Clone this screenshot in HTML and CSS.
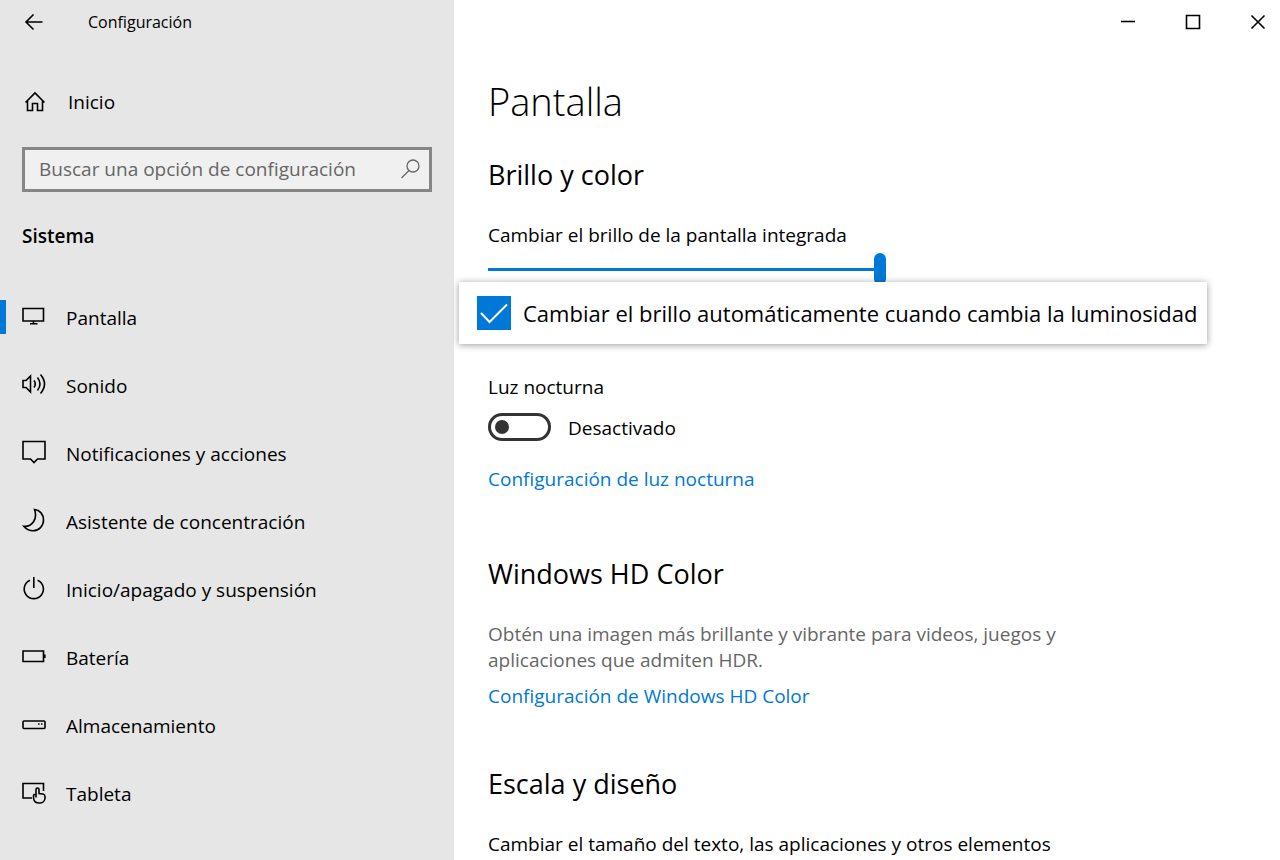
FILE: index.html
```html
<!DOCTYPE html>
<html lang="es">
<head>
<meta charset="utf-8">
<meta name="viewport" content="width=device-width, initial-scale=1">
<title>Configuración</title>
<link rel="stylesheet" href="styles.css">
</head>
<body>
<div class="window">
  <aside class="sidebar">
    <header class="titlebar">
      <button class="back" type="button" aria-label="Atrás">
        <svg class="icon" viewBox="0 0 24 24"><path d="M20.500 12H4M11.500 4.500 4 12l7.500 7.500"/></svg>
      </button>
      <span class="app-name">Configuración</span>
    </header>
    <a class="home" href="#">
      <svg class="icon" viewBox="0 0 24 24"><path d="M2.500 12.500 12 3l9.500 9.500M4.500 11v9.500h5V13.500h5v7h5V11"/></svg>
      <span>Inicio</span>
    </a>
    <form class="search">
      <input class="search-input" type="search" placeholder="Buscar una opción de configuración" aria-label="Buscar una opción de configuración">
      <button class="search-button" type="button" aria-label="Buscar">
        <svg class="icon icon-thin" viewBox="0 0 24 24"><circle cx="14" cy="9" r="6"/><path d="M10 13.500 2.500 21"/></svg>
      </button>
    </form>
    <h2 class="section-name">Sistema</h2>
    <nav class="nav">
      <a class="nav-item nav-item-current" href="#" aria-current="page">
        <svg class="icon" viewBox="0 0 24 24"><path d="M1 4.500h20.500v12.500H1zM11.500 17v3M8 19.800h7.500"/></svg>
        <span>Pantalla</span>
      </a>
      <a class="nav-item" href="#">
        <svg class="icon" viewBox="0 0 24 24"><path d="M1 8.500h3L8.500 4v16L4 15.500H1zM12 8.500q2.500 3.500 0 7M15.500 5.500q5 6.500 0 13M18.500 2.500q8 9.500 0 19"/></svg>
        <span>Sonido</span>
      </a>
      <a class="nav-item" href="#">
        <svg class="icon" viewBox="0 0 24 24"><path d="M1 1.500h22v17.500h-7.500L12 22.500 8.500 19H1z"/></svg>
        <span>Notificaciones y acciones</span>
      </a>
      <a class="nav-item" href="#">
        <svg class="icon" viewBox="0 0 24 24"><path d="M12.500 1.500C18 2 21.500 6.500 21.500 12A10.500 10.500 0 0 1 11 22.800C7.200 22.800 4 21 1.800 18.300 10 19 16 11 12.500 1.500z"/></svg>
        <span>Asistente de concentración</span>
      </a>
      <a class="nav-item" href="#">
        <svg class="icon" viewBox="0 0 24 24"><path d="M11.800 1v11M8 4.200a9.600 9.600 0 1 0 7.600 0"/></svg>
        <span>Inicio/apagado y suspensión</span>
      </a>
      <a class="nav-item" href="#">
        <svg class="icon" viewBox="0 0 24 24"><path d="M1 7h20.500v10.500H1zM22.800 10.500v3.500"/></svg>
        <span>Batería</span>
      </a>
      <a class="nav-item" href="#">
        <svg class="icon" viewBox="0 0 24 24"><rect x="1" y="9" width="22" height="7.500" rx="1"/><path d="M16 12h1.500M19 12h1.500"/></svg>
        <span>Almacenamiento</span>
      </a>
      <a class="nav-item" href="#">
        <svg class="icon" viewBox="0 0 24 24"><path d="M10 18H1V3.500h20.500V11M11.500 16c0-1.500 1-2 2.500-1V9.500c0-2 3-2 3 0v4l4 .500q2 .500 2 2.500V18c0 3-2.500 5-5.500 5-4 0-6-2.500-6-5.500zM14 15v2.500"/></svg>
        <span>Tableta</span>
      </a>
    </nav>
  </aside>
  <main class="main">
    <div class="window-controls">
      <button class="window-button" type="button" aria-label="Minimizar"><svg class="icon" viewBox="0 0 24 24"><path d="M5 11.500h14"/></svg></button>
      <button class="window-button window-button-wide" type="button" aria-label="Maximizar"><svg class="icon" viewBox="0 0 24 24"><path d="M5.500 5.500h13v13h-13z"/></svg></button>
      <button class="window-button" type="button" aria-label="Cerrar"><svg class="icon" viewBox="0 0 24 24"><path d="m5.500 5.500 13 13m0-13-13 13"/></svg></button>
    </div>
    <div class="content">
      <h1 class="page-title">Pantalla</h1>
      <section class="group group-main">
        <h2 class="group-title">Brillo y color</h2>
        <label class="label" for="brightness">Cambiar el brillo de la pantalla integrada</label>
        <input class="slider" id="brightness" type="range" min="0" max="100" value="100">
        <label class="callout">
          <input class="checkbox" type="checkbox" checked>
          <svg class="check-mark" viewBox="0 0 34 34"><path d="m4 17 8.500 9L30 8.500"/></svg>
          <span>Cambiar el brillo automáticamente cuando cambia la luminosidad</span>
        </label>
        <span class="label" id="night-label">Luz nocturna</span>
        <div class="toggle-row">
          <input class="toggle" id="night" type="checkbox" role="switch" aria-labelledby="night-label">
          <label for="night">Desactivado</label>
        </div>
        <a class="link" href="#">Configuración de luz nocturna</a>
      </section>
      <section class="group">
        <h2 class="group-title">Windows HD Color</h2>
        <p class="description">Obtén una imagen más brillante y vibrante para videos, juegos y aplicaciones que admiten HDR.</p>
        <a class="link" href="#">Configuración de Windows HD Color</a>
      </section>
      <section class="group">
        <h2 class="group-title">Escala y diseño</h2>
        <p class="label">Cambiar el tamaño del texto, las aplicaciones y otros elementos</p>
      </section>
    </div>
  </main>
</div>
</body>
</html>
```
FILE: styles.css
```css
* { box-sizing: border-box; }

body {
  margin: 0;
  background: #fff;
  color: #000;
  font: 19px/26px "Open Sans", "Noto Sans", sans-serif;
}

h1, h2, p { margin: 0; font-weight: 400; }
a { color: inherit; text-decoration: none; }
button, input { margin: 0; padding: 0; border: 0; background: none; font: inherit; color: inherit; }

.window { display: flex; min-height: 100vh; }

.icon {
  flex: none;
  display: block;
  width: 24px;
  height: 24px;
  fill: none;
  stroke: currentColor;
  stroke-width: 1.6;
}

.icon-thin { stroke-width: 1.3; }

.sidebar { flex: none; width: 454px; background: #e6e6e6; }

.titlebar {
  display: flex;
  align-items: center;
  gap: 42px;
  height: 44px;
  padding-left: 22px;
}

.app-name { font-size: 16px; }

.home {
  display: flex;
  align-items: center;
  gap: 21px;
  height: 60px;
  margin-top: 28px;
  padding-left: 23px;
}

.search {
  display: flex;
  align-items: center;
  height: 45px;
  margin: 15px 22px 0;
  padding: 0 6px 2px 14px;
  border: 3px solid #868686;
  background: #f0f0f0;
  color: #666;
}

.search-input { flex: 1; min-width: 0; outline: 0; appearance: none; }
.search-input::placeholder { color: #666; opacity: 1; }

.section-name {
  margin: 31px 22px 35px;
  font-size: 19px;
  font-weight: 600;
}

.nav-item {
  display: flex;
  align-items: center;
  gap: 20px;
  height: 68px;
  padding-left: 22px;
}

.nav-item .icon { margin-bottom: 4px; }

.nav-item-current { padding-left: 0; }

.nav-item-current::before {
  content: "";
  width: 6px;
  height: 34px;
  margin: 0 -4px 2px 0;
  background: #0078d7;
}

.main { flex: 1; min-width: 0; }

.window-controls { display: flex; justify-content: flex-end; height: 44px; }

.window-button {
  display: flex;
  align-items: center;
  justify-content: center;
  width: 44px;
}

.window-button-wide { width: 86px; }

.content { padding: 31px 34px 0; }

.page-title {
  margin-bottom: 30px;
  font-size: 38px;
  font-weight: 300;
  line-height: 52px;
}

.group { margin-bottom: 57px; }
.group:last-child { margin-bottom: 0; }
.group-main { margin-bottom: 64px; }
.group-title { margin-bottom: 29px; font-size: 27px; line-height: 36px; }
.label { display: block; }

.slider {
  display: block;
  width: 398px;
  height: 32px;
  margin-top: 5px;
  appearance: none;
}

.slider::-webkit-slider-runnable-track {
  height: 32px;
  background: linear-gradient(#0078d7, #0078d7) 0 center / 100% 3px no-repeat;
}

.slider::-webkit-slider-thumb {
  width: 12px;
  height: 32px;
  border-radius: 6px;
  background: #0078d7;
  appearance: none;
}

.callout {
  position: relative;
  display: flex;
  align-items: center;
  gap: 12px;
  width: fit-content;
  min-height: 62px;
  margin: -3px 0 30px -29px;
  padding: 0 10px 0 18px;
  background: #fff;
  box-shadow: 0 1px 7px rgba(0, 0, 0, 0.4);
  font-size: 22px;
}

.checkbox { flex: none; width: 34px; height: 34px; background: #0078d7; appearance: none; }

.check-mark {
  flex: none;
  width: 34px;
  height: 34px;
  margin-left: -46px;
  fill: none;
  stroke: #fff;
  stroke-width: 2;
  pointer-events: none;
}

.toggle-row { display: flex; align-items: center; gap: 17px; margin: 13px 0 25px; }

.toggle-row label { padding-top: 2px; }

.toggle {
  display: flex;
  align-items: center;
  width: 63px;
  height: 28px;
  padding-left: 4px;
  border: 3px solid #333;
  border-radius: 14px;
  appearance: none;
}

.toggle::before {
  content: "";
  width: 14px;
  height: 14px;
  border-radius: 50%;
  background: #333;
}

.link { display: block; width: fit-content; color: #0078d7; }

.description { max-width: 600px; margin-bottom: 10px; color: #666; }
```
